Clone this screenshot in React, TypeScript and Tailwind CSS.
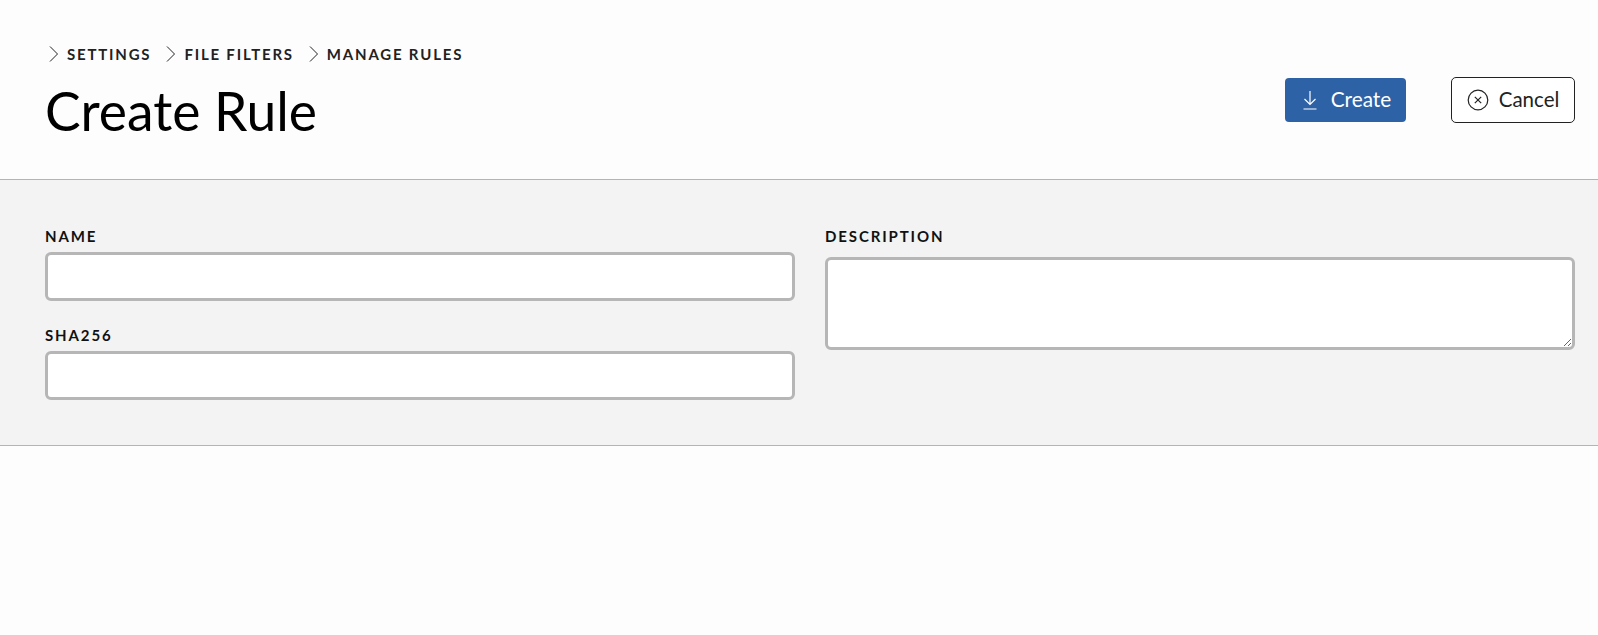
const crumbs = ["Settings", "File Filters", "Manage Rules"];

const labelClass = "block text-[15px] leading-[18px] font-bold uppercase tracking-[0.125em] text-[#111]";
const fieldClass = "block w-full bg-white border-[3px] border-[#b6b6b6] rounded-[6px] outline-none";

const App = () => {
  return (
    <div className="min-h-[635px] bg-[#fdfdfd] font-['Lato',sans-serif]">
      <header className="h-[180px] flex items-start justify-between pl-[45px] pr-[23px] border-b border-[#b4b4b4]">
        <div className="pt-[45px]">
          <nav className="flex items-center h-[18px] pl-[4px]">
            {crumbs.map((crumb) => (
              <span key={crumb} className="flex items-center mr-[15px]">
                <svg width="10" height="16" viewBox="0 0 10 16" fill="none" stroke="#222" strokeWidth="1" className="mr-[8px]">
                  <path d="M1 .5 8.500 8 1 15.500" />
                </svg>
                <span className="text-[15px] leading-[18px] font-bold uppercase tracking-[0.12em] text-[#222]">{crumb}</span>
              </span>
            ))}
          </nav>
          <h1 className="mt-[15px] text-[53.400px] leading-[64px] font-normal text-black">Create Rule</h1>
        </div>
        <div className="flex items-center gap-[45px] pt-[77px]">
          <button className="flex items-center justify-center w-[121px] h-[44px] rounded-[4px] bg-[#2d62a6] text-white text-[20.800px] leading-[24px] pb-[3px] pl-[1px]">
            <svg width="18" height="20" viewBox="0 0 18 20" fill="none" stroke="currentColor" strokeWidth="1.2" className="mr-[12px] mt-[3px]">
              <path d="M9 1v13M3.500 9 9 14.500 14.500 9M2.500 19h13" />
            </svg>
            Create
          </button>
          <button className="flex items-center justify-center w-[124px] h-[46px] rounded-[5px] border border-[#222] bg-white text-[#222] text-[20.500px] leading-[24px] pb-[2px]">
            <svg width="22" height="22" viewBox="0 0 22 22" fill="none" stroke="currentColor" strokeWidth="1.2" className="mr-[10px] mt-[2px]">
              <circle cx="11" cy="11" r="9.800" />
              <path d="m7.800 7.800 6.400 6.400M14.200 7.800l-6.400 6.400" />
            </svg>
            Cancel
          </button>
        </div>
      </header>
      <section className="h-[266px] bg-[#f3f3f3] border-b border-[#b4b4b4] pl-[45px] pr-[23px] pt-[47px] grid grid-cols-2 gap-x-[30px] content-start">
        <div>
          <label className={labelClass}>Name</label>
          <input className={`${fieldClass} h-[49px] mt-[7px]`} />
          <label className={`${labelClass} mt-[25px]`}>SHA256</label>
          <input className={`${fieldClass} h-[49px] mt-[7px]`} />
        </div>
        <div>
          <label className={labelClass}>Description</label>
          <textarea className={`${fieldClass} h-[93px] mt-[12px]`} />
        </div>
      </section>
    </div>
  );
};

export default App;
